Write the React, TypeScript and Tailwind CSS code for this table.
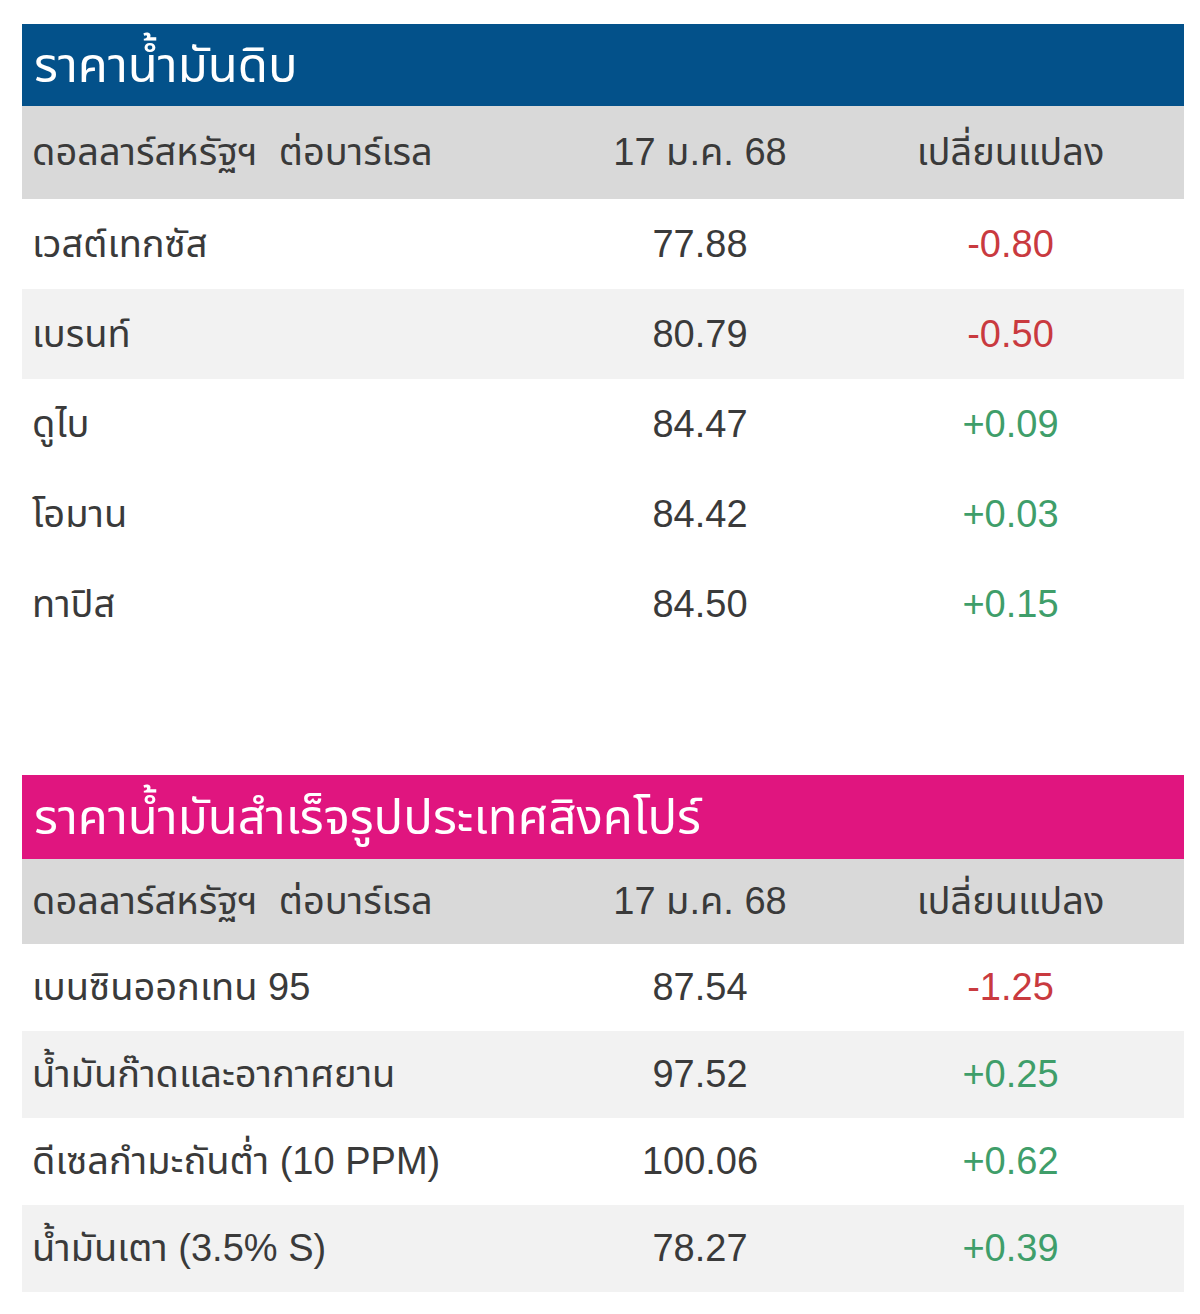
import React from "react";

type Row = { name: string; price: string; change: string };

const crude: Row[] = [
  { name: "เวสต์เทกซัส", price: "77.88", change: "-0.80" },
  { name: "เบรนท์", price: "80.79", change: "-0.50" },
  { name: "ดูไบ", price: "84.47", change: "+0.09" },
  { name: "โอมาน", price: "84.42", change: "+0.03" },
  { name: "ทาปิส", price: "84.50", change: "+0.15" },
];

const refined: Row[] = [
  { name: "เบนซินออกเทน 95", price: "87.54", change: "-1.25" },
  { name: "น้ำมันก๊าดและอากาศยาน", price: "97.52", change: "+0.25" },
  { name: "ดีเซลกำมะถันต่ำ (10 PPM)", price: "100.06", change: "+0.62" },
  { name: "น้ำมันเตา (3.5% S)", price: "78.27", change: "+0.39" },
];

const font = {
  fontFamily:
    '"Liberation Sans", Arial, "Noto Sans Thai", "Noto Sans", sans-serif',
};

function PriceTable({
  title,
  headerClass,
  colHeadClass,
  rows,
  rowHeight,
  striped,
}: {
  title: string;
  headerClass: string;
  colHeadClass: string;
  rows: Row[];
  rowHeight: string;
  striped: number[];
}) {
  return (
    <div className="w-[1162px]">
      {/* title bar */}
      <div className={`${headerClass} flex items-center px-[12px] pt-[2px] text-[49px] text-white`}>
        {title}
      </div>

      {/* column header */}
      <div className={`grid ${colHeadClass} grid-cols-[541px_274px_1fr] items-center bg-[#d9d9d9] text-[38px] text-[#3a3a3a]`}>
        <div className="pl-[10px]">ดอลลาร์สหรัฐฯ&nbsp; ต่อบาร์เรล</div>
        <div className="text-center">17 ม.ค. 68</div>
        <div className="text-center">เปลี่ยนแปลง</div>
      </div>

      {rows.map((r, i) => (
        <div
          key={r.name}
          className={`grid ${rowHeight} grid-cols-[541px_274px_1fr] items-center text-[38px] text-[#3a3a3a] ${
            striped.includes(i) ? "bg-[#f2f2f2]" : "bg-white"
          }`}
        >
          <div className="pl-[10px]">{r.name}</div>
          <div className="text-center">{r.price}</div>
          <div
            className={`text-center ${
              r.change.startsWith("-") ? "text-[#c93a3f]" : "text-[#3f9e6a]"
            }`}
          >
            {r.change}
          </div>
        </div>
      ))}
    </div>
  );
}

export default function App() {
  return (
    <div className="min-h-[1314px] bg-white pl-[22px] pt-[24px]" style={font}>
      <PriceTable
        title="ราคาน้ำมันดิบ"
        headerClass="h-[82px] bg-[#03518a]"
        colHeadClass="h-[93px]"
        rows={crude}
        rowHeight="h-[90px]"
        striped={[1]}
      />
      <div className="h-[126px]" />
      <PriceTable
        title="ราคาน้ำมันสำเร็จรูปประเทศสิงคโปร์"
        headerClass="h-[84px] bg-[#e0157f]"
        colHeadClass="h-[85px]"
        rows={refined}
        rowHeight="h-[87px]"
        striped={[1, 3]}
      />
    </div>
  );
}
